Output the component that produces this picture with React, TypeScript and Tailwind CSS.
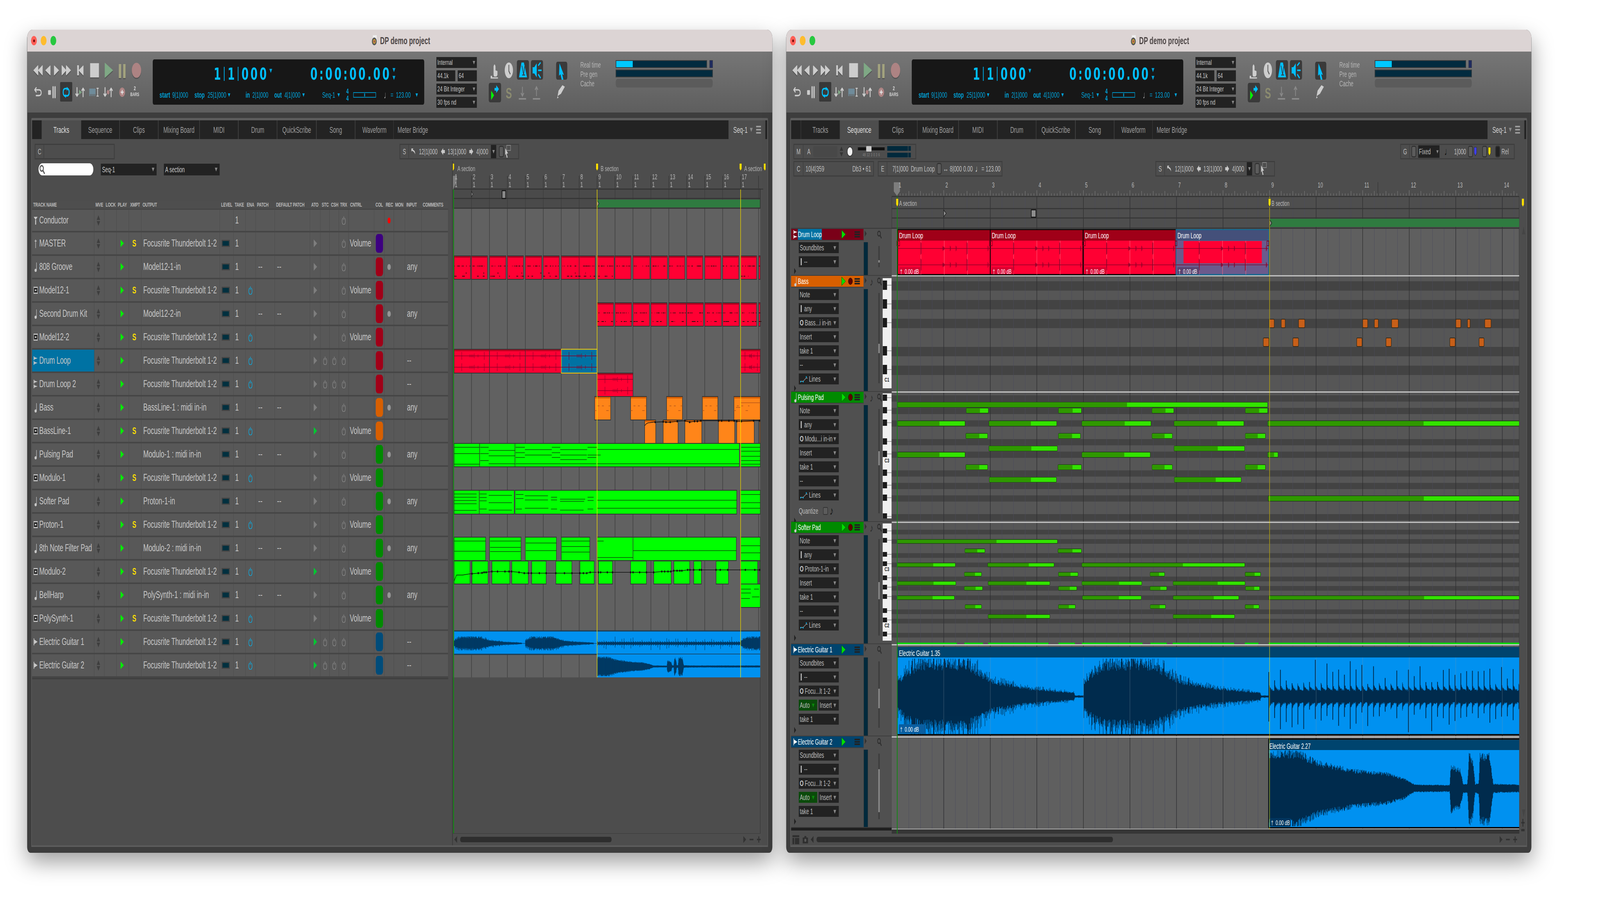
import React from 'react';

function rng(seed: number) {
  let s = seed >>> 0;
  return () => {
    s = (s + 0x6d2b79f5) >>> 0;
    let t = s;
    t = Math.imul(t ^ (t >>> 15), t | 1);
    t ^= t + Math.imul(t ^ (t >>> 7), t | 61);
    return ((t ^ (t >>> 14)) >>> 0) / 4294967296;
  };
}
function lerp(pts: number[][], x: number) {
  for (let i = 1; i < pts.length; i++) {
    if (x <= pts[i][0]) {
      const [a, b] = pts[i - 1];
      const [c, d] = pts[i];
      return b + ((d - b) * (x - a)) / (c - a || 1);
    }
  }
  return pts[pts.length - 1][1];
}

const Caret = ({ c = '#8a8a8a', s = 12 }: { c?: string; s?: number }) => (
  <svg width={s} height={s} viewBox="0 0 12 12" className="shrink-0">
    <polygon points="1,2 11,2 6,11" fill={c} />
  </svg>
);

/* ---------- toolbar ---------- */
function Transport() {
  const c = '#cdcdcd';
  const rj = { strokeLinejoin: 'round' as const };
  return (
    <div className="flex flex-col w-[500px] mt-[18px] ml-[18px] shrink-0">
      <svg width={500} height={50} viewBox="0 0 1500 150" className="drop-shadow-[0_2px_1px_rgba(0,0,0,0.35)]">
        <g fill={c} stroke={c} strokeWidth={6} style={rj}>
          <polygon points="27,90 80,54 80,126" />
          <polygon points="84,90 135,54 135,126" />
          <polygon points="175,90 232,56 232,126" />
          <polygon points="281,56 336,90 281,126" />
          <polygon points="376,54 428,90 376,126" />
          <polygon points="430,54 484,90 430,126" />
          <rect x="568" y="54" width="15" height="72" />
          <polygon points="587,90 640,56 640,126" />
          <rect x="728" y="38" width="104" height="104" />
        </g>
        <polygon points="908,34 1006,90 908,146" fill="#7fa885" stroke="#7fa885" strokeWidth={4} style={rj} />
        <rect x="1080" y="42" width="30" height="108" rx="3" fill="#a3a37f" />
        <rect x="1134" y="42" width="30" height="108" rx="3" fill="#a3a37f" />
        <circle cx="1299" cy="90" r="58" fill="#ad8383" />
      </svg>
      <div className="flex items-start mt-[10px]">
        <svg width={400} height={52} viewBox="0 0 1200 156" className="shrink-0">
          <rect x="354" y="0" width="150" height="150" rx="10" fill="#383838" />
          <g fill="none" stroke="#cdcdcd" strokeWidth={11} strokeLinecap="round" strokeLinejoin="round">
            <path d="M42 60 H90 Q120 60 120 82 Q120 104 90 104 H58" />
            <path d="M58 44 L40 60 L58 76" />
            <path d="M267 38 V118 M291 38 V118" strokeWidth={15} />
            <path d="M563 44 V108 M548 92 L563 108 L578 92" />
            <path d="M638 112 V48 M623 64 L638 48 L653 64" />
            <path d="M910 44 V108 M895 92 L910 108 L925 92" />
            <path d="M985 112 V48 M970 64 L985 48 L1000 64" />
            <path d="M808 48 H828 M808 108 H828 M818 48 V108" strokeWidth={8} />
          </g>
          <rect x="205" y="62" width="35" height="36" rx="5" fill="#cdcdcd" />
          <g fill="none" stroke="#00bfff" strokeWidth={12} strokeLinecap="round">
            <path d="M450 50 H420 Q392 50 392 78 Q392 100 410 106" />
            <path d="M408 106 H438 Q466 106 466 78 Q466 60 450 52" />
          </g>
          <polygon points="436,36 458,52 436,68" fill="#00bfff" />
          <polygon points="426,92 404,108 426,122" fill="#00bfff" />
          <polygon points="589,60 624,78 589,98" fill="#7fa885" />
          <path d="M715 50 H792 V108 H788 V92 H778 V108 H770 V92 H760 V108 H752 V92 H742 V108 H734 V92 H724 V108 H715 Z" fill="#6f8c9b" />
          <circle cx="948" cy="78" r="17" fill="#ad8383" />
          <circle cx="1122" cy="78" r="36" fill="#ad8383" />
          <path d="M1122 60 V96 M1104 78 H1140" stroke="#e0e0e0" strokeWidth={10} />
        </svg>
        <div className="ml-[1px] flex flex-col items-center text-[#d6d6d6] font-bold leading-none mt-[8px] w-[50px]">
          <span className="text-[15px]">2</span>
          <span className="text-[13px] mt-[2px]">BARS</span>
        </div>
      </div>
    </div>
  );
}

const Bar = () => <span className="text-[38px] font-normal mx-[1px] font-['Liberation_Sans',sans-serif] relative -top-[3px] text-[#00a8e0]">|</span>;

function Display() {
  const Sm = ({ children, w }: { children: React.ReactNode; w: number }) => (
    <span className="shrink-0 whitespace-nowrap" style={{ width: w }}>{children}</span>
  );
  return (
    <div className="ml-[0px] mt-[20px] w-[1120px] h-[116px] rounded-[6px] bg-[#171717] shrink-0 flex flex-col text-[#00a4dc]">
      <div className="flex items-center h-[72px] pt-[2px] text-[#00bfff] font-['DejaVu_Sans',sans-serif] font-bold text-[42px] tracking-[8px] whitespace-nowrap">
        <div className="ml-[252px] w-[398px] flex items-center">
          <span>1</span><Bar /><span>1</span><Bar /><span>000</span>
          <span className="ml-[2px] -mt-[16px]"><Caret c="#00a4dc" s={14} /></span>
        </div>
        <span className="tracking-[8px]">0:00:00.00</span>
        <span className="ml-[4px] flex flex-col gap-[6px]"><Caret c="#00a4dc" s={14} /><Caret c="#00a4dc" s={14} /></span>
      </div>
      <div className="flex items-center text-[20px] h-[36px] mt-[1px] pl-[28px] whitespace-nowrap">
        <Sm w={52}><b>start</b></Sm>
        <Sm w={92}>9|1|000</Sm>
        <Sm w={54}><b>stop</b></Sm>
        <Sm w={83}>25|1|000</Sm>
        <Sm w={74}><Caret c="#00a4dc" /></Sm>
        <Sm w={28}><b>in</b></Sm>
        <Sm w={90}>2|1|000</Sm>
        <Sm w={42}><b>out</b></Sm>
        <Sm w={73}>4|1|000</Sm>
        <Sm w={83}><Caret c="#00a4dc" /></Sm>
        <Sm w={62}>Seq-1</Sm>
        <Sm w={37}><Caret c="#00a4dc" /></Sm>
        <span className="w-[29px] flex flex-col items-start leading-[18px] font-bold text-[18px]"><span>4</span><span>4</span></span>
        <div className="w-[94px] h-[14px] border-[2px] border-[#0090c0] flex items-center justify-center shrink-0"><div className="w-[4px] h-[8px] bg-[#0090c0]" /></div>
        <span className="ml-[32px] w-[28px] text-[#9a9a9a] text-[26px] leading-none">♩</span>
        <span className="w-[22px]">=</span>
        <span className="w-[80px]">123.00</span>
        <Caret c="#00a4dc" />
      </div>
    </div>
  );
}

function TopSelects() {
  const B = ({ t, w, car = true }: { t: string; w: number; car?: boolean }) => (
    <div className="h-[28px] bg-[#222] text-[#c4c4c4] text-[19px] flex items-center justify-between pl-[4px] pr-[6px] whitespace-nowrap" style={{ width: w }}>
      <span>{t}</span>{car && <Caret />}
    </div>
  );
  return (
    <div className="ml-[50px] mt-[14px] flex flex-col gap-[6px] shrink-0 w-[167px]">
      <B t="Internal" w={167} />
      <div className="flex justify-between"><B t="44.1k" w={78} car={false} /><B t="64" w={79} car={false} /></div>
      <B t="24 Bit Integer" w={167} />
      <B t="30 fps nd" w={167} />
    </div>
  );
}

function RightIcons() {
  return (
    <svg width={330} height={110} viewBox="2020 152 330 110" className="ml-[47px] mt-[20px] shrink-0">
      <rect x="2138" y="154" width="50" height="50" rx="6" fill="#3a3a3a" />
      <rect x="2196" y="154" width="50" height="50" rx="6" fill="#3a3a3a" />
      <rect x="2300" y="158" width="46" height="46" rx="6" fill="#3a3a3a" />
      <rect x="2022" y="212" width="51" height="50" rx="6" fill="#3a3a3a" />
      <path d="M2042 192 V170 Q2046 160 2050 170 V180 L2058 182 V192 L2054 196 H2044 Z" fill="#cdcdcd" />
      <path d="M2030 194 H2036 V198 H2060 V201 H2030 Z" fill="#cdcdcd" />
      <ellipse cx="2105" cy="180" rx="17" ry="20" fill="#cdcdcd" />
      <path d="M2105 166 V182 L2111 190" stroke="#555" strokeWidth="3" fill="none" />
      <path d="M2157 160 H2167 L2180 198 H2147 Z" fill="#00bfff" />
      <path d="M2159 168 L2166 192 L2170 170 M2160 192 H2172" stroke="#3a3a3a" strokeWidth="2.5" fill="none" />
      <path d="M2203 172 H2210 L2220 162 V198 L2210 188 H2203 Z" fill="#00bfff" />
      <path d="M2226 168 L2236 160 M2226 180 H2240 M2226 190 L2236 200" stroke="#00bfff" strokeWidth="4" />
      <polygon points="2314,162 2332,192 2325,190 2330,204 2323,204 2318,190 2312,194" fill="#00bfff" />
      <polygon points="2032,238 2044,250 2032,262" fill="#00ff00" transform="translate(0 -6)" />
      <path d="M2046 225 H2053 V218 L2064 228 L2053 238 V232 H2046 Z" fill="#00bfff" />
      <text x="2105" y="252" fontSize="38" fontWeight="700" fill="#8c8c70" textAnchor="middle" fontFamily="Liberation Sans">S</text>
      <path d="M2161 222 V244 M2155 238 L2161 246 L2167 238" stroke="#8a8a8a" strokeWidth="3" fill="none" />
      <path d="M2146 251 H2176 V255 H2146 Z" fill="#8a8a8a" />
      <path d="M2219 246 V224 M2213 230 L2219 222 L2225 230" stroke="#8a8a8a" strokeWidth="3" fill="none" />
      <path d="M2204 251 H2234 V255 H2204 Z" fill="#8a8a8a" />
      <path d="M2306 246 L2310 232 L2326 218 L2336 222 L2320 240 Z" fill="#cdcdcd" />
      <path d="M2306 246 L2304 252 L2310 250" fill="#cdcdcd" />
    </svg>
  );
}

function Meters() {
  return (
    <div className="flex mt-[22px] ml-[50px] shrink-0 text-[20px] text-[#b8b8b8]">
      <div className="w-[146px] flex flex-col leading-[24px] pt-[0px]">
        <span>Real time</span><span>Pre gen</span><span>Cache</span>
      </div>
      <div className="flex flex-col gap-[4px] w-[400px]">
        <div className="flex items-center">
          <div className="w-[400px] h-[20px] bg-[#022b3f] border-[2px] border-[#3c3c3c] flex"><div className="w-[68px] bg-[#00c8ff]" /></div>
          <div className="ml-[11px] w-[13px] h-[20px] bg-[#1f2b5e] border-[1px] border-[#3c3c3c] shrink-0" />
        </div>
        <div className="w-[400px] h-[20px] bg-[#022b3f] border-[2px] border-[#3c3c3c]" />
        <div className="w-[400px] h-[22px] rounded-[8px] bg-[#5b5b5b]" />
      </div>
    </div>
  );
}

function Titlebar() {
  return (
    <div className="h-[56px] bg-[#dcd4d4] flex items-center relative shrink-0">
      <div className="flex items-center gap-[16px] ml-[16px]">
        <span className="w-[24px] h-[24px] rounded-full bg-[#ff5f57] flex items-center justify-center"><span className="w-[7px] h-[7px] rounded-full bg-[#6e0505]" /></span>
        <span className="w-[24px] h-[24px] rounded-full bg-[#febc2e]" />
        <span className="w-[24px] h-[24px] rounded-full bg-[#28c840]" />
      </div>
      <div className="ml-[1300px] flex items-center gap-[10px] text-[26px] font-bold text-[#4c4545] whitespace-nowrap">
        <svg width="26" height="28" viewBox="0 0 26 28"><rect x="6" y="0" width="16" height="20" fill="#eee" /><circle cx="12" cy="16" r="10" fill="#555" /><circle cx="12" cy="16" r="6" fill="#c9a23a" /><circle cx="12" cy="16" r="3" fill="#a05050" /></svg>
        <span>DP demo project</span>
      </div>
    </div>
  );
}

function Toolbar() {
  return (
    <div className="h-[156px] bg-gradient-to-b from-[#767676] to-[#5e5e5e] flex shrink-0">
      <Transport />
      <Display />
      <TopSelects />
      <RightIcons />
      <Meters />
    </div>
  );
}

function Tabs({ active }: { active: string }) {
  const tabs: [string, number][] = [['Tracks', 162], ['Sequence', 159], ['Clips', 160], ['Mixing Board', 170], ['MIDI', 160], ['Drum', 160], ['QuickScribe', 162], ['Song', 160], ['Waveform', 159]];
  return (
    <div className="h-[48px] flex shrink-0 text-[22px] whitespace-nowrap">
      <div className="w-[40px] bg-[#232323]" />
      {tabs.map(([t, w]) => (
        <div key={t} style={{ width: w }} className={t === active ? 'bg-[#4d4d4d] text-[#dedede] flex items-center justify-center' : 'bg-[#232323] text-[#9a9a9a] border-l border-r border-[#4f4f4f] flex items-center justify-center'}>{t}</div>
      ))}
      <div className="flex-1 bg-[#232323] text-[#9a9a9a] pl-[16px] flex items-center">Meter Bridge</div>
      <div className="w-[152px] flex items-center pl-[20px] text-[#cfcfcf]">
        <span>Seq-1</span><span className="ml-[8px]"><Caret s={14} /></span>
        <div className="ml-[13px] w-[20px] flex flex-col gap-[4px]"><i className="h-[4px] bg-[#9a9a9a]" /><i className="h-[4px] bg-[#9a9a9a]" /><i className="h-[4px] bg-[#9a9a9a]" /></div>
      </div>
      <div className="w-[8px] bg-[#232323]" />
    </div>
  );
}

const Toggle = ({ c = '#5c5c5c' }: { c?: string }) => <span className="inline-block w-[20px] h-[30px] rounded-[6px] bg-[#565656] border-[3px] border-[#333] shrink-0" style={{ background: c }} />;

function SBox({ className = '' }: { className?: string }) {
  return (
    <div className={'h-[40px] w-[493px] border-[3px] border-[#3e3e3e] flex items-center text-[20px] text-[#bdbdbd] whitespace-nowrap shrink-0 ' + className}>
      <span className="w-[36px] text-center border-r-[2px] border-[#3e3e3e] h-full flex items-center justify-center shrink-0">S</span>
      <svg width="22" height="20" viewBox="0 0 22 20" className="ml-[7px] shrink-0"><path d="M3 10 L3 2 L11 2 L8 5 Q18 6 19 17 Q14 10 6 8 Z" fill="#c8c8c8" /></svg>
      <span className="ml-[12px]">12|1|000</span>
      <svg width="20" height="20" viewBox="0 0 20 20" className="ml-[12px] shrink-0"><path d="M2 10 L11 1 V6 H18 V14 H11 V19 Z" fill="#c8c8c8" /></svg>
      <span className="ml-[9px]">13|1|000</span>
      <svg width="20" height="20" viewBox="0 0 20 20" className="ml-[11px] shrink-0"><path d="M18 10 L9 1 V6 H2 V14 H9 V19 Z" fill="#c8c8c8" /></svg>
      <span className="ml-[10px]">4|000</span>
      <span className="ml-[11px] w-[22px] h-[34px] bg-[#222] flex items-center justify-center shrink-0"><Caret s={12} /></span>
      <span className="ml-[11px] flex"><Toggle /></span>
      <svg width="26" height="34" viewBox="0 0 26 34" className="ml-[4px] shrink-0"><rect x="8" y="1" width="16" height="13" fill="none" stroke="#888" strokeWidth="2" /><polygon points="2,8 14,22 8,22 12,32 8,33 5,23 2,26" fill="#c8c8c8" /></svg>
    </div>
  );
}

/* ---------- Tracks table ---------- */
const COLW = [257, 42, 50, 51, 51, 324, 56, 50, 42, 79, 145, 43, 38, 38, 41, 105, 42, 39, 46, 68, 110];
const HEAD = ['TRACK NAME', 'MVE', 'LOCK', 'PLAY', 'XMPT', 'OUTPUT', 'LEVEL', 'TAKE', 'ENA', 'PATCH', 'DEFAULT PATCH', 'ATO', 'STC', 'CSH', 'TRX', 'CNTRL', 'COL', 'REC', 'MON', 'INPUT', 'COMMENTS'];
const FOC = 'Focusrite Thunderbolt 1-2';
type T = { n: string; t: string; out?: string; s?: boolean; ena?: boolean; mid?: boolean; ato?: string; au?: boolean; vol?: boolean; col?: string; rec?: boolean; inp?: string; sel?: boolean };
const RD = '#a00018', OR = '#d85f00', GR = '#008a00', BL = '#004c7a';
const TR: T[] = [
  { n: 'Conductor', t: 'c' },
  { n: 'MASTER', t: 'm', out: FOC, s: true, ato: 'g', vol: true, col: '#3d0080' },
  { n: '808 Groove', t: 'n', out: 'Model12-1-in', mid: true, ato: 'g', col: RD, rec: true, inp: 'any' },
  { n: 'Model12-1', t: 'i', out: FOC, s: true, ena: true, ato: 'g', vol: true, col: RD },
  { n: 'Second Drum Kit', t: 'n', out: 'Model12-2-in', mid: true, ato: 'g', col: RD, rec: true, inp: 'any' },
  { n: 'Model12-2', t: 'i', out: FOC, s: true, ena: true, ato: 'g', vol: true, col: RD },
  { n: 'Drum Loop', t: 'a', out: FOC, ena: true, ato: 'g', au: true, col: RD, inp: '--', sel: true },
  { n: 'Drum Loop 2', t: 'a', out: FOC, ena: true, ato: 'g', au: true, col: RD, inp: '--' },
  { n: 'Bass', t: 'n', out: 'BassLine-1 : midi in-in', mid: true, ato: 'g', col: OR, rec: true, inp: 'any' },
  { n: 'BassLine-1', t: 'i', out: FOC, s: true, ena: true, ato: 'v', vol: true, col: OR },
  { n: 'Pulsing Pad', t: 'n', out: 'Modulo-1 : midi in-in', mid: true, ato: 'g', col: GR, rec: true, inp: 'any' },
  { n: 'Modulo-1', t: 'i', out: FOC, s: true, ena: true, ato: 'g', vol: true, col: GR },
  { n: 'Softer Pad', t: 'n', out: 'Proton-1-in', mid: true, ato: 'g', col: GR, rec: true, inp: 'any' },
  { n: 'Proton-1', t: 'i', out: FOC, s: true, ena: true, ato: 'g', vol: true, col: GR },
  { n: '8th Note Filter Pad', t: 'n', out: 'Modulo-2 : midi in-in', mid: true, ato: 'g', col: GR, rec: true, inp: 'any' },
  { n: 'Modulo-2', t: 'i', out: FOC, s: true, ena: true, ato: 'v', vol: true, col: GR },
  { n: 'BellHarp', t: 'n', out: 'PolySynth-1 : midi in-in', mid: true, ato: 'g', col: GR, rec: true, inp: 'any' },
  { n: 'PolySynth-1', t: 'i', out: FOC, s: true, ena: true, ato: 'g', vol: true, col: GR },
  { n: 'Electric Guitar 1', t: 'e', out: FOC, ena: true, ato: 'v', au: true, col: BL, inp: '--' },
  { n: 'Electric Guitar 2', t: 'e', out: FOC, ena: true, ato: 'v', au: true, col: BL, inp: '--' },
];

const Power = ({ c = '#8c8c8c' }: { c?: string }) => (
  <svg width="16" height="22" viewBox="0 0 16 22"><path d="M5 5 A7 9 0 1 0 11 5" fill="none" stroke={c} strokeWidth="1.8" /><path d="M8 1 V10" stroke={c} strokeWidth="1.8" /></svg>
);
const Tri = ({ c, h = 18 }: { c: string; h?: number }) => (
  <svg width={h * 0.7} height={h} viewBox="0 0 7 10"><polygon points="0,0 7,5 0,10" fill={c} /></svg>
);
const TypeIcon = ({ t, white }: { t: string; white?: boolean }) => {
  const c = '#c8c8c8';
  if (t === 'i') return <svg width="18" height="18" viewBox="0 0 18 18"><rect width="18" height="18" fill="#c0c0c0" /><rect x="2" y="3" width="14" height="12" fill="#222" /><rect x="6" y="7" width="6" height="4" fill="#ccc" /></svg>;
  if (t === 'n') return <svg width="18" height="28" viewBox="0 0 18 28"><ellipse cx="9" cy="23" rx="4.5" ry="4" fill={c} /><path d="M12.5 3 V22" stroke={c} strokeWidth="1.8" /></svg>;
  if (t === 'm') return <svg width="18" height="28" viewBox="0 0 18 28"><path d="M9 4 V26 M5 8 H13" stroke={c} strokeWidth="2" /></svg>;
  if (t === 'c') return <svg width="18" height="26" viewBox="0 0 18 26"><path d="M1 4 H17 L9 12 Z M7 12 H11 V24 H7 Z" fill={c} /></svg>;
  if (t === 'a') return <svg width="18" height="24" viewBox="0 0 18 24"><path d="M2 1 V11 M2 13 V23" stroke={c} strokeWidth="2.5" /><path d="M3 3 L17 6 L3 9 Z M3 15 L17 18 L3 21 Z" fill={white ? '#fff' : c} /></svg>;
  return <svg width="18" height="20" viewBox="0 0 18 20"><path d="M2 1 V19" stroke={c} strokeWidth="2.5" /><path d="M3 4 L17 10 L3 16 Z" fill={white ? '#fff' : c} /></svg>;
};

function Row({ r, i }: { r: T; i: number }) {
  const Cell = ({ k, children, className = '' }: { k: number; children?: React.ReactNode; className?: string }) => (
    <div style={{ width: COLW[k] }} className={'h-full shrink-0 border-r border-[#474747] flex items-center ' + className}>{children}</div>
  );
  const has = i > 0;
  return (
    <div className={(i === 0 ? 'h-[58px] ' : 'h-[60px] ') + 'flex bg-[#585858] border-b-[4px] border-[#464646] text-[26.5px] text-[#c6c6c6] whitespace-nowrap'}>
      <Cell k={0} className={r.sel ? 'bg-[#0072a3] pl-[5px]' : 'pl-[5px]'}>
        <span className="w-[19px] flex justify-center shrink-0"><TypeIcon t={r.t} /></span>
        <span className="ml-[6px] tracking-[-0.2px]">{r.n}</span>
      </Cell>
      <Cell k={1} className="justify-center">
        <div className="flex flex-col gap-[3px] -ml-[8px]">
          <svg width="14" height="12" viewBox="0 0 14 12"><polygon points="7,0 14,12 0,12" fill="#3e3e3e" /></svg>
          <svg width="14" height="12" viewBox="0 0 14 12"><polygon points="0,0 14,0 7,12" fill="#3e3e3e" /></svg>
        </div>
      </Cell>
      <Cell k={2} />
      <Cell k={3} className="pl-[16px]">{has && <Tri c="#00ee00" h={20} />}</Cell>
      <Cell k={4} className="pl-[14px]">{r.s && <span className="font-bold text-[#ffe000] text-[24px]">S</span>}</Cell>
      <Cell k={5} className="pl-[8px]">{r.out}</Cell>
      <Cell k={6} className="pl-[8px]">{has && <span className="w-[32px] h-[18px] bg-[#00303f] border-[3px] border-[#444] block" />}</Cell>
      <Cell k={7} className="pl-[7px]">1</Cell>
      <Cell k={8} className="pl-[12px]">{r.ena && <Power c="#00b4f0" />}</Cell>
      <Cell k={9} className="pl-[10px]">{r.mid && '--'}</Cell>
      <Cell k={10} className="pl-[9px]">{r.mid && '--'}</Cell>
      <Cell k={11} className="pl-[15px]">{r.ato && <Tri c={r.ato === 'v' ? '#00c832' : '#7e7e7e'} h={20} />}</Cell>
      <Cell k={12} className="pl-[11px]">{r.au && <Power />}</Cell>
      <Cell k={13} className="pl-[11px]">{r.au && <Power />}</Cell>
      <Cell k={14} className="pl-[12px]"><Power /></Cell>
      <Cell k={15} className="pl-[4px]">{r.vol && 'Volume'}</Cell>
      <Cell k={16} className="justify-center">{r.col && <span className="w-[30px] h-[48px] rounded-[9px] block" style={{ background: r.col }} />}</Cell>
      <Cell k={17} className="justify-center">{i === 0 && <span className="w-[12px] h-[15px] rounded-full bg-[#ff0000] block" />}{r.rec && <span className="w-[14px] h-[15px] rounded-full bg-[#969696] block" />}</Cell>
      <Cell k={18} />
      <Cell k={19} className="pl-[8px]">{r.inp}</Cell>
      <Cell k={20} />
    </div>
  );
}

function TracksTable() {
  return (
    <div className="w-[1717px] shrink-0 flex flex-col">
      <div className="flex items-center h-[33px] mt-[5px] ml-[27px] text-[20px] text-[#c8c8c8]">
        <div className="w-[226px] h-[31px] rounded-full bg-white flex items-center pl-[3px]">
          <svg width="26" height="26" viewBox="0 0 26 26"><circle cx="10" cy="10" r="7" fill="none" stroke="#555" strokeWidth="3.5" /><path d="M15 15 L22 24" stroke="#555" strokeWidth="4" /></svg>
        </div>
        <div className="ml-[31px] w-[230px] h-[30px] bg-[#222] flex items-center justify-between pl-[5px] pr-[8px]"><span>Seq-1</span><Caret s={13} /></div>
        <div className="ml-[30px] w-[230px] h-[30px] bg-[#222] flex items-center justify-between pl-[5px] pr-[8px]"><span>A section</span><Caret s={13} /></div>
      </div>
      <div className="h-[65px] shrink-0" />
      <div className="flex h-[19px] shrink-0 text-[15px] font-bold text-[#b8b8b8] tracking-[-0.4px] items-center whitespace-nowrap bg-[#4e4e4e] border-b-[3px] border-[#464646] box-content">
        {HEAD.map((h, i) => <div key={h} style={{ width: COLW[i] }} className="shrink-0 pl-[5px] overflow-hidden">{h}</div>)}
      </div>
      {TR.map((r, i) => <Row key={r.n} r={r} i={i} />)}
      <div className="h-[4px] bg-[#404040]" />
    </div>
  );
}

/* ---------- left timeline ---------- */
const LX = (X: number) => X / 1.206 + 1850;
const LB = (n: number) => 1871 + 74 * (n - 1);

const Marker = ({ x, y, h = 20, c = '#ffe000' }: { x: number; y: number; h?: number; c?: string }) => (
  <path d={`M${x - 5} ${y} H${x + 5} V${y + h * 0.7} L${x} ${y + h} L${x - 5} ${y + h * 0.7} Z`} fill={c} stroke="#444" strokeWidth="1.5" />
);

function waveD(x0: number, x1: number, cy: number, f: (x: number, r: () => number) => [number, number], seed: number, step = 1.5) {
  const r = rng(seed);
  let d = '';
  for (let x = x0; x < x1; x += step) {
    const [a, b] = f(x, r);
    d += `M${x.toFixed(1)} ${(cy - a).toFixed(1)}V${(cy + b).toFixed(1)}`;
  }
  return d;
}

function eg1Fn(start: number, barW: number, maxA: number, spikeFrom: number, spikeTo: number) {
  const s = barW / 192;
  const pts = [[0, 0.45], [40, 0.75], [90, 1], [290, 1], [340, 0.72], [400, 0.45], [550, 0.24], [728, 0.12], [731, 0.03], [768, 0.03]];
  return (x: number, r: () => number): [number, number] => {
    if (x >= spikeFrom && x < spikeTo) {
      const pos = (x - spikeFrom) / s;
      const k = Math.floor(pos / 24);
      const p = pos % 24;
      const r2 = rng(k * 7 + 11);
      const h1 = 0.3 + r2() * 0.68, h2 = 0.3 + r2() * 0.68;
      const saw = Math.exp(-p / 7);
      const base = 0.13 + 0.2 * saw + r() * 0.05;
      const top = p < 1.7 ? Math.max(base, (k % 2 ? 0.75 : 1) * h1) : base;
      const bot = p < 1.7 ? Math.max(base, (k % 2 ? 0.8 : 1) * h2) : base;
      return [maxA * top, maxA * bot];
    }
    const t = ((x - start) / s) % 768;
    const e = lerp(pts, t);
    const spike = r() > 0.82 ? 0.28 : 0;
    const a = e * maxA * (0.68 + r() * 0.3 + spike);
    const b = e * maxA * (0.6 + r() * 0.34 + spike * 1.4);
    return [Math.min(maxA, a), Math.min(maxA, b)];
  };
}
function eg2Fn(start: number, barW: number, maxA: number) {
  const s = barW / 192;
  const pts = [[0, 1], [120, 1], [200, 0.72], [350, 0.5], [480, 0.42], [555, 0.28], [600, 0.1], [745, 0.09], [750, 0.62], [790, 0.5], [800, 0.12], [818, 0.12], [825, 0.95], [840, 0.8], [850, 0.12], [865, 0.15], [870, 0.95], [910, 0.9], [925, 0.12], [1040, 0.1]];
  return (x: number, r: () => number): [number, number] => {
    const e = lerp(pts, (x - start) / s);
    return [Math.min(maxA, e * maxA * (0.78 + r() * 0.26)), Math.min(maxA, e * maxA * (0.8 + r() * 0.28))];
  };
}

function LeftClip({ a, b, y, h, c, strip, sel, children }: { a: number; b: number; y: number; h: number; c: string; strip?: string; sel?: boolean; children?: React.ReactNode }) {
  const x0 = LX(a), x1 = LX(b);
  return (
    <g>
      <rect x={x0} y={y} width={x1 - x0} height={h} fill={sel ? '#0072a3' : c} stroke={sel ? '#ffc800' : '#333'} strokeWidth="2" />
      {strip && !sel && <rect x={x0 + 1} y={y + 1} width={x1 - x0 - 2} height={4} fill={strip} />}
      {children}
    </g>
  );
}

function LeftTimeline() {
  const RED = '#ff0033', RST = '#b80020', ORA = '#ff8519', OST = '#d85f00', GRN = '#00ff00';
  const c1: [number, number][] = [[28, 110], [114, 194], [204, 286], [293, 373], [382, 464], [471, 551], [561, 650], [650, 730], [740, 824], [828, 908], [918, 1002], [1007, 1089], [1096, 1176], [1185, 1265], [1275, 1355], [1364, 1444], [1454, 1533], [1543, 1551]];
  const c2: [number, number][] = [[740, 821], [828, 911], [918, 1000], [1007, 1087], [1096, 1183], [1185, 1268], [1275, 1359], [1364, 1446], [1454, 1533], [1543, 1551]];
  const dl: [number, number, boolean?][] = [[28, 204], [204, 382], [382, 561], [561, 739, true], [1454, 1551]];
  const bs: [number, number][] = [[727, 807], [906, 985], [1085, 1164], [1263, 1340], [1420, 1551]];
  const bl: [number, number][] = [[976, 1031], [1068, 1142], [1176, 1260], [1343, 1424], [1434, 1521], [1547, 1551]];
  const m2: [number, number][] = [[28, 107], [117, 197], [216, 305], [315, 397], [414, 486], [534, 614], [654, 725], [746, 816], [906, 985], [1021, 1108], [1121, 1200], [1220, 1258], [1331, 1393], [1454, 1538], [1548, 1551]];
  const p8: [number, number][] = [[28, 185], [204, 361], [382, 537], [561, 703], [740, 918], [918, 1432], [1454, 1551]];
  const pul: [number, number][] = [[28, 155], [155, 331], [331, 1447], [1453, 1551]];
  const sof: [number, number][] = [[28, 153], [153, 327], [331, 1434], [1451, 1551]];
  const r = rng(7);
  const dots = (a: number, b: number, y: number, n: number, maxw = 3) => {
    let d = '';
    for (let i = 0; i < n; i++) {
      const x = a + r() * (b - a - 3);
      d += `M${x.toFixed(1)} ${y}h${(1 + r() * maxw).toFixed(1)}`;
    }
    return d;
  };
  const dlw = (x0: number, x1: number, y: number) => {
    let d = `M${x0} ${y}H${x1}`;
    const w = (x1 - x0) / 148;
    [32, 66, 72, 78, 84, 100, 126].forEach((o, i) => {
      const h = i === 0 || i === 6 ? 10 : i === 4 ? 6 : 4;
      d += `M${x0 + o * w} ${y - h}V${y + h}`;
    });
    return d;
  };
  const autoPts: [number, number][] = [[1028, 1334], [1068, 1332], [1082, 1334], [1103, 1334], [1138, 1330], [1176, 1327], [1200, 1334], [1224, 1330], [1238, 1330], [1255, 1327], [1343, 1327], [1359, 1327], [1395, 1327], [1421, 1327], [1434, 1330], [1457, 1330], [1518, 1327], [1547, 1327]];
  const m2Pts: [number, number][] = [[117, 454], [148, 452], [167, 451], [177, 449], [187, 449], [216, 446], [244, 446], [281, 446], [301, 446], [314, 446], [351, 449], [377, 452], [397, 452], [413, 452], [452, 452], [486, 452], [534, 452], [577, 452], [614, 452], [654, 452], [671, 452], [688, 452], [705, 449], [746, 449], [757, 449], [790, 449], [816, 449], [906, 449], [918, 449], [951, 449], [985, 449], [1021, 449], [1061, 446], [1075, 446], [1092, 446], [1106, 446], [1121, 443], [1137, 443], [1151, 443], [1161, 443], [1190, 440], [1201, 440], [1220, 440], [1249, 440], [1258, 440], [1331, 440], [1352, 440], [1389, 440], [1453, 440], [1477, 440], [1524, 440], [1548, 440]];
  const y5 = (Y: number) => 400 + Y / 1.96;
  const y6 = (Y: number) => 1150 + Y / 1.425;
  const hlines = (ls: [number, number, number][], fn: (Y: number) => number) => ls.map(([a, b, Y]) => `M${LX(a).toFixed(1)} ${fn(Y).toFixed(1)}H${LX(b).toFixed(1)}`).join('');
  const pl: [number, number, number][] = [[28, 155, 1460], [28, 155, 1492], [28, 155, 1545], [158, 200, 1460], [200, 331, 1476], [158, 200, 1492], [200, 331, 1503], [158, 200, 1527], [200, 331, 1543], [334, 380, 1460], [380, 514, 1472], [514, 556, 1460], [556, 690, 1472], [692, 738, 1460], [334, 380, 1487], [380, 514, 1499], [514, 556, 1487], [556, 688, 1499], [692, 757, 1499], [334, 380, 1511], [514, 556, 1511], [556, 688, 1522], [692, 735, 1511], [738, 1447, 1471], [738, 1447, 1543], [334, 735, 1543], [1456, 1551, 1460], [1456, 1551, 1480], [1456, 1551, 1505], [1456, 1551, 1527], [1456, 1551, 1545]];
  const sl: [number, number, number][] = [[28, 140, 163], [28, 140, 175], [28, 140, 187], [28, 140, 199], [28, 140, 223], [155, 190, 163], [155, 190, 176], [155, 190, 188], [200, 316, 168], [200, 316, 195], [155, 190, 218], [200, 316, 222], [335, 373, 165], [380, 495, 170], [510, 540, 175], [555, 680, 182], [692, 722, 175], [335, 373, 180], [380, 495, 185], [510, 540, 185], [555, 675, 190], [692, 722, 187], [335, 365, 218], [380, 497, 215], [510, 540, 218], [555, 672, 222], [692, 720, 218], [738, 1434, 186], [738, 1434, 215], [1454, 1551, 165], [1454, 1551, 195], [1454, 1551, 215]];
  const pad: [number, number, number][] = [[28, 185, 335], [28, 185, 372], [207, 360, 335], [207, 360, 358], [207, 360, 373], [385, 537, 342], [385, 537, 370], [563, 703, 335], [563, 703, 355], [563, 703, 375], [740, 772, 335], [740, 918, 395], [918, 1432, 370], [1454, 1551, 352], [1454, 1551, 378]];
  return (
    <div className="w-[1290px] shrink-0 relative h-[1722px]">
      <svg width={1290} height={1722} viewBox="1868 412 1290 1722" className="block">
        <rect x="1868" y="534" width="1268" height="1200" fill="#616161" />
        <rect x="1871" y="485" width="1265" height="49" fill="#4a4a4a" />
        {Array.from({ length: 18 }, (_, i) => {
          const x = LB(i + 1);
          return <React.Fragment key={i}>
            <path d={`M${x} 450V482`} stroke="#2d2d2d" strokeWidth="1.5" />
            <path d={`M${x} 485V1734`} stroke="#3c3c3c" strokeWidth="2" />
          </React.Fragment>;
        })}
        <path d="M1871 1734V534" stroke="#3c3c3c" />
        <rect x="2463" y="511" width="673" height="20" fill="#2f7b40" />
        <path d="M1871 484H3136M1871 508H3136M1871 533H3136M3136 484V534" stroke="#333" strokeWidth="2.5" fill="none" />
        <path d="M3136 484H3148" stroke="#333" strokeWidth="2" />
        <polygon points="1945,490 1945,504 1951,497" fill="#9a9a9a" stroke="#1f1f1f" strokeWidth="1.5" />
        <rect x="2071" y="488" width="15" height="20" fill="#8a8a8a" stroke="#111" strokeWidth="2.5" />
        <polygon points="2463,513 2463,530 2471,521" fill="#8a8a8a" stroke="#1f1f1f" strokeWidth="1.5" />
        {/* red */}
        {c1.map(([a, b], i) => <LeftClip key={i} a={a} b={b} y={655} h={60} c={RED} strip={RST} />)}
        <path d={c1.map(([a, b]) => dots(LX(a), LX(b), 681, 12)).join('') + c1.filter((_, i) => i < 9 || i === 16).map(([a, b]) => dots(LX(a), LX(b), 707, 4, 9)).join('') + c1.filter((_, i) => i < 8).map(([a, b]) => dots(LX(a), LX(b), 699, 1, 4)).join('')} stroke="#331111" strokeWidth="1.8" />
        {c2.map(([a, b], i) => <LeftClip key={i} a={a} b={b} y={775} h={60} c={RED} strip={RST} />)}
        <path d={c2.map(([a, b]) => dots(LX(a), LX(b), 801, 12)).join('') + c2.map(([a, b]) => dots(LX(a), LX(b), 823, 5, 8)).join('')} stroke="#331111" strokeWidth="1.8" />
        {dl.map(([a, b, s], i) => <LeftClip key={i} a={a} b={b} y={894} h={61} c={RED} strip={RST} sel={s} />)}
        {dl.map(([a, b], i) => <path key={i} d={dlw(LX(a), LX(b), 911) + dlw(LX(a), LX(b), 940)} stroke="#8a0028" strokeWidth="1.6" />)}
        <LeftClip a={740} b={918} y={955} h={60} c={RED} strip={RST} />
        <path d={dlw(LX(740), LX(918), 971) + dlw(LX(740), LX(918), 1000)} stroke="#8a0028" strokeWidth="1.6" />
        {/* orange */}
        {bs.map(([a, b], i) => <LeftClip key={i} a={a} b={b} y={1015} h={60} c={ORA} strip={OST} />)}
        <path d={bs.map(([a]) => { const x = LX(a); return `M${x + 12} 1039h8M${x + 30} 1039h8M${x + 58} 1039h6M${x} 1051h8M${x + 48} 1051h10`; }).join('') + `M${LX(1455)} 1031H${LX(1551)}M${LX(1430)} 1043h18`} stroke="#b5561a" strokeWidth="1.6" />
        {bl.map(([a, b], i) => <LeftClip key={i} a={a} b={b} y={1075} h={60} c={ORA} strip={OST} />)}
        <path d={`M${LX(976)} 1090 Q${LX(985)} 1082 ${LX(1000)} 1082 L${LX(1028)} 1080` + ' ' + autoPts.map(([X, Y]) => `L${LX(X)} ${y5(Y)}`).join(' ')} stroke="#111" strokeWidth="1.6" fill="none" />
        {autoPts.map(([X, Y], i) => <rect key={i} x={LX(X) - 2.5} y={y5(Y) - 2.5} width="5" height="5" fill="#111" />)}
        {/* green */}
        {pul.map(([a, b], i) => <LeftClip key={i} a={a} b={b} y={1135} h={60} c={GRN} />)}
        <path d={hlines(pl, y5)} stroke="#0b4b0b" strokeWidth="1.5" />
        {sof.map(([a, b], i) => <LeftClip key={i} a={a} b={b} y={1255} h={61} c={GRN} />)}
        <path d={hlines(sl, y6)} stroke="#0b4b0b" strokeWidth="1.5" />
        {p8.map(([a, b], i) => <LeftClip key={i} a={a} b={b} y={1375} h={60} c={GRN} />)}
        <path d={hlines(pad, y6)} stroke="#0b4b0b" strokeWidth="1.5" />
        {m2.map(([a, b], i) => <LeftClip key={i} a={a} b={b} y={1436} h={59} c={GRN} />)}
        <path d={`M${LX(28)} 1487 L${LX(40)} 1472 H${LX(70)} L${LX(117)} 1468 ` + m2Pts.map(([X, Y]) => `L${LX(X)} ${y6(Y)}`).join(' ')} stroke="#111" strokeWidth="1.5" fill="none" />
        {m2Pts.map(([X, Y], i) => <rect key={i} x={LX(X) - 2.5} y={y6(Y) - 2.5} width="5" height="5" fill="#111" />)}
        <LeftClip a={1454} b={1551} y={1495} h={60} c={GRN} />
        <path d={`M${LX(1456)} 1508h40M${LX(1520)} 1508h20M${LX(1456)} 1518h40M${LX(1510)} 1528h30M${LX(1456)} 1532h36`} stroke="#0b4b0b" strokeWidth="1.5" />
        {/* audio */}
        <rect x={LX(28)} y="1615" width={LX(1551) - LX(28)} height="60" fill="#0091f0" />
        <path d="M1873 1615H3136M1873 1675H3136" stroke="#1d3c52" strokeWidth="3" />
        <path d={waveD(LX(28), LX(1551), 1647, eg1Fn(1871, 74, 18, 2463, 3055), 3, 1)} stroke="#002b4d" strokeWidth="1" />
        <rect x="2463" y="1675" width="673" height="59" fill="#0091f0" />
        <path d={waveD(2464, 3136, 1706, eg2Fn(2464, 74, 25), 5, 1)} stroke="#002b4d" strokeWidth="1" />
        {/* play lines */}
        <path d="M2463 485V1734M3055 485V1734" stroke="#ffe600" strokeWidth="2" />
        <path d="M1871 485V2134" stroke="#128a12" strokeWidth="3.5" />
        <polygon points="1868,450 1884,450 1884,464 1869,485 1868,485" fill="#7d7d7d" />
        <path d="M1868 2134H3136V1734" stroke="#333" strokeWidth="1.5" fill="none" />
        <Marker x={1869} y={418} />
        <Marker x={2463} y={418} />
        <Marker x={3055} y={418} />
        <Marker x={3155} y={418} />
      </svg>
      {[[1887, 'A section'], [2478, 'B section'], [3070, 'A section']].map(([x, t]) => (
        <span key={t as string + x} className="absolute top-[7px] text-[18px] text-[#b4b4b4] whitespace-nowrap" style={{ left: (x as number) - 1868 }}>{t as string}</span>
      ))}
      {Array.from({ length: 17 }, (_, i) => (
        <span key={i} className="absolute top-[31px] text-[19px] leading-[20px] text-[#b8b8b8] flex flex-col" style={{ left: LB(i + 1) + 5 - 1868 }}><span>{i + 1}</span><span>1</span></span>
      ))}
    </div>
  );
}

function BottomBar({ left, x0, w }: { left?: React.ReactNode; x0: number; w: number }) {
  return (
    <div className="h-[30px] flex items-center shrink-0">
      {left}
      <svg width="12" height="18" viewBox="0 0 12 18" style={{ marginLeft: x0 }} className="shrink-0"><polygon points="12,0 0,9 12,18" fill="#333" /></svg>
      <div className="ml-[12px] h-[14px] rounded-[7px] bg-[#2e2e2e] shrink-0" style={{ width: w }} />
    </div>
  );
}

function TracksView() {
  return (
    <div className="flex flex-col flex-1 bg-[#4d4d4d] min-h-0">
      <Tabs active="Tracks" />
      <div className="flex h-[40px] mt-[12px] shrink-0">
        <div className="ml-[11px] w-[330px] h-[40px] border-[3px] border-[#3e3e3e] flex items-center text-[20px] text-[#bdbdbd]">
          <span className="w-[36px] h-full border-r-[2px] border-[#3e3e3e] flex items-center justify-center">C</span>
        </div>
        <SBox className="ml-[1175px]" />
      </div>
      <div className="flex mt-[4px] flex-1 min-h-0">
        <TracksTable />
        <div className="w-[19px] shrink-0 border-r-[3px] border-[#3a3a3a]" />
        <div className="flex flex-col">
          <LeftTimeline />
          <div className="flex items-center h-[30px] relative">
            <BottomBar x0={6} w={625} />
            <div className="ml-auto mr-[20px] flex items-center gap-[14px]">
              <svg width="12" height="18" viewBox="0 0 12 18"><polygon points="0,0 12,9 0,18" fill="#333" /></svg>
              <span className="w-[16px] h-[4px] bg-[#333]" />
              <svg width="16" height="16" viewBox="0 0 16 16"><path d="M8 0V16M0 8H16" stroke="#333" strokeWidth="4" /></svg>
            </div>
          </div>
        </div>
      </div>
    </div>
  );
}

/* ---------- Sequence view ---------- */
const RB = (n: number) => 3701 + 192 * (n - 1);
const Z10 = (X: number) => X / 0.729 + 4200;
type Nt = [number, number, number];

function Note({ n, h, sp = 0.62, c = ['#2f9800', '#33e400'] }: { n: Nt; h: number; sp?: number; c?: string[] }) {
  const [a, b, y] = n;
  const w = b - a;
  return (
    <g>
      <rect x={a} y={y - h / 2} width={w} height={h} rx="2" fill={c[1]} stroke="#1e3d10" strokeWidth="1.5" />
      <rect x={a + 1} y={y - h / 2 + 1} width={(w - 2) * sp} height={h - 2} fill={c[0]} />
    </g>
  );
}

function RightCanvas() {
  const bands: [number, number, number[]][] = [
    [24, 0, [720, 768, 816, 888, 936]],
    [16, 0, [1012, 1044, 1076, 1124, 1156, 1204, 1236, 1268, 1316]],
    [12, 0, [1356, 1380, 1416, 1440, 1476, 1500, 1524, 1560, 1584, 1620]],
  ];
  const pul: Nt[] = [
    [3703, 5229, 1036], [3986, 4077, 1051], [4366, 4461, 1051], [4752, 4842, 1051], [5137, 5229, 1051],
    [3703, 3981, 1084], [4079, 4359, 1084], [4463, 4748, 1084], [4843, 5131, 1084], [5229, 6267, 1084],
    [3984, 4074, 1116], [4366, 4457, 1116], [4752, 4836, 1116], [5137, 5220, 1116],
    [4079, 4362, 1148], [4843, 5134, 1148],
    [3703, 3981, 1164], [4463, 4745, 1164], [5229, 5272, 1164],
    [3984, 4074, 1196], [4364, 4461, 1196], [4752, 4836, 1196], [5137, 5220, 1196],
    [4081, 4358, 1228], [4844, 5120, 1228], [5231, 6267, 1276],
  ];
  const sof: Nt[] = [
    [3701, 4362, 1386], [3980, 4063, 1410], [4364, 4461, 1410],
    [3701, 3941, 1446], [4074, 4348, 1446], [4463, 5135, 1446],
    [3978, 4049, 1470], [4366, 4447, 1470], [4744, 4804, 1470], [5136, 5200, 1470],
    [3701, 3943, 1493], [4076, 4331, 1493], [4463, 4710, 1493], [4839, 5136, 1493],
    [3978, 4053, 1506], [4366, 4442, 1506], [4744, 4813, 1506], [5138, 5196, 1506],
    [3701, 3937, 1530], [4465, 4708, 1530], [4839, 5110, 1530], [5234, 6267, 1530],
    [3981, 4049, 1553], [4366, 4436, 1553], [4745, 4808, 1553], [5136, 5194, 1553],
    [4076, 4331, 1578], [4839, 5093, 1578],
  ];
  const b1 = [[755, 770], [791, 803], [843, 862], [1036, 1051], [1071, 1083], [1123, 1143], [1316, 1331], [1351, 1359], [1403, 1422]];
  const b2 = [[737, 754], [826, 843], [1018, 1034], [1106, 1122], [1298, 1314], [1386, 1401]];
  const vel = [[3701, 3947], [3978, 4055], [4076, 4325], [4366, 4434], [4463, 4713], [4745, 4813], [4837, 5091], [5135, 5191], [5233, 6267]];
  const cl = [3703, 4085, 4469, 4851];
  const dlw = (x0: number, y: number) => {
    let d = `M${x0} ${y}H${x0 + 381}`;
    [95, 186, 190, 216, 240, 285, 372].forEach((o, i) => {
      const h = i === 1 ? 6 : i === 0 || i === 5 ? 16 : i === 2 ? 5 : 7;
      d += `M${x0 + o} ${y - h}V${y + h}M${x0 + o + 2} ${y - h + 2}V${y + h - 2}`;
    });
    return d;
  };
  const ticks = (() => {
    let d = '';
    for (let x = 3701, i = 0; x < 6262; x += 12, i++) {
      const t = i % 16 === 0 ? 487 : i % 4 === 0 ? 489 : 495;
      d += `M${x} ${t}V501`;
    }
    return d;
  })();
  const beats = (() => {
    let d = '';
    for (let x = 3701; x < 6267; x += 48) d += `M${x} 503V2123`;
    return d;
  })();
  const bars = (() => {
    let d = '';
    for (let x = 3701 + 192; x < 6267; x += 192) d += `M${x} 503V2123`;
    return d;
  })();
  return (
    <div className="relative w-[2589px] h-[1682px] shrink-0">
      <svg width={2589} height={1682} viewBox="3678 452 2589 1682" className="block">
        <rect x="3678" y="503" width="2589" height="83" fill="#4e4e4e" />
        <rect x="3678" y="586" width="2589" height="1537" fill="#5f5f5f" />
        <rect x="3678" y="708" width="2589" height="296" fill="#565656" />
        <rect x="3678" y="1004" width="2589" height="334" fill="#565656" />
        <rect x="3678" y="1338" width="2589" height="313" fill="#565656" />
        {bands.map(([h, , ys], i) => ys.map((y) => <rect key={i + '-' + y} x="3678" y={y} width="2589" height={h} fill="#434343" />))}
        <path d={ticks} stroke="#8d8d8d" strokeWidth="1" />
        <path d={beats} stroke="#4b4b5e" strokeWidth="1.2" />
        <path d={bars} stroke="#2b2b2b" strokeWidth="1.8" />
        <path d="M5684 466V503" stroke="#2b2b2b" />
        <path d="M3678 503H6267M3678 534H6267M3678 558H6267M3678 584H6267M3678 503V586M6267 503V2134" stroke="#343434" strokeWidth="2.5" fill="none" />
        <rect x="5237" y="560" width="1030" height="21" fill="#2f7b40" />
        <polygon points="3893,538 3893,555 3903,546" fill="#9a9a9a" stroke="#1f1f1f" strokeWidth="1.8" />
        <rect x="4254" y="537" width="19" height="19" fill="#8e8e8e" stroke="#111" strokeWidth="2.5" />
        <polygon points="5237,562 5237,580 5246,571" fill="#8a8a8a" stroke="#1f1f1f" strokeWidth="1.8" />
        {/* separators */}
        <path d="M3678 706H6267M3678 1003.5H6267M3678 1337H6267M3678 1650.5H6267M3678 1886.5H6267M3678 2123H6267" stroke="#c8c8c8" strokeWidth="3" />
        {/* drum clips */}
        {cl.map((x, i) => {
          const sel = i === 3;
          return (
            <g key={x}>
              <rect x={x} y={588} width={382} height={115} fill={sel ? '#6b5a8c' : '#ff0033'} stroke={sel ? '#116a92' : '#050505'} strokeWidth="3" />
              <rect x={x + 1.5} y={589} width={379} height={27} fill={sel ? '#44507a' : '#a00018'} />
              {sel && <rect x={4882} y={617} width={323} height={57} fill="#ff0033" />}
              <path d={`M${x + 96} 616V703M${x + 288} 616V703M${x + 192} 616V703`} stroke="#ff6a80" strokeWidth="1.5" />
              <path d={dlw(x, 636) + dlw(x, 678)} stroke="#8a0028" strokeWidth="1.5" />
              <rect x={x - 4} y={617} width={sel ? 8 : 12} height={12} fill="none" stroke="#7d0020" strokeWidth="1.8" />
              <rect x={x + 6} y={684} width={90} height={18} rx="3" fill={sel ? '#5a4470' : '#d90030'} />
            </g>
          );
        })}
        <rect x="5226" y="617" width="8" height="12" fill="none" stroke="#7d0020" strokeWidth="1.8" />
        {/* bass */}
        {b1.map(([a, b]) => <rect key={a} x={Z10(a)} y={817} width={Z10(b) - Z10(a)} height={22} rx="3" fill="#c85f18" stroke="#3a2c1a" strokeWidth="2" />)}
        {b2.map(([a, b]) => <rect key={a} x={Z10(a)} y={865} width={Z10(b) - Z10(a)} height={22} rx="3" fill="#c85f18" stroke="#3a2c1a" strokeWidth="2" />)}
        {/* pads */}
        {pul.map((n, i) => <Note key={i} n={n} h={13} />)}
        {sof.map((n, i) => <Note key={i} n={n} h={10} />)}
        {vel.map(([a, b]) => <rect key={a} x={a} y={1645} width={b - a} height={4} fill="#00d800" />)}
        {/* guitar 1 */}
        <rect x="3703" y="1656" width="2564" height="27" fill="#00446e" />
        <rect x="3703" y="1683" width="2564" height="197" fill="#0091f0" />
        <path d={waveD(3703, 6267, 1783, eg1Fn(3703, 192, 97, 5233, 6267), 9)} stroke="#002b4d" strokeWidth="1.6" />
        <path d="M3703 1880.5H6267" stroke="#050505" strokeWidth="3" />
        <path d="M3893 1683V1880M4085 1683V1880M4277 1683V1880M4469 1683V1880M4661 1683V1880M4853 1683V1880M5045 1683V1880M5429 1683V1880M5621 1683V1880M5813 1683V1880M6005 1683V1880M6197 1683V1880" stroke="#8a9aa6" strokeWidth="1" opacity="0.55" />
        {/* guitar 2 */}
        <rect x="5233" y="1894" width="1034" height="26" fill="#00446e" />
        <rect x="5233" y="1920" width="1034" height="197" fill="#0091f0" />
        <path d={waveD(5235, 6267, 2018, eg2Fn(5235, 192, 97), 13)} stroke="#002b4d" strokeWidth="1.6" />
        <path d="M5233 1892H6267M5233 2118.5H6267M5233 1892V2118" stroke="#050505" strokeWidth="3" />
        <rect x="5238" y="2094" width="86" height="22" rx="3" fill="#00355e" />
        <rect x="3708" y="1854" width="108" height="24" rx="3" fill="#0a5ea0" />
        <rect x="3678" y="2123" width="2589" height="11" fill="#363636" />
        {/* lines */}
        <path d="M5237 503V2123" stroke="#ffe600" strokeWidth="1.5" />
        <path d="M3701 503V2134" stroke="#128a12" strokeWidth="3" />
        <path d="M3686 466 H3713 V490 L3700 502 L3686 490 Z" fill="#7d7d7d" stroke="#444" />
        <Marker x={3701} y={508} h={22} />
        <Marker x={5237} y={508} h={22} />
      </svg>
      <span className="absolute top-[8px] text-[19px] text-[#b8b8b8]" style={{ left: 3700 - 3678 + 7 }}>1</span>
      {Array.from({ length: 13 }, (_, i) => (
        <span key={i} className="absolute top-[8px] text-[19px] text-[#b8b8b8]" style={{ left: RB(i + 2) + 7 - 3678 }}>{i + 2}</span>
      ))}
      <span className="absolute top-[56px] left-[31px] text-[18px] text-[#b8b8b8] whitespace-nowrap">A section</span>
      <span className="absolute top-[56px] left-[1567px] text-[18px] text-[#b8b8b8] whitespace-nowrap">B section</span>
      {cl.map((x) => (
        <React.Fragment key={x}>
          <span className="absolute top-[136px] text-[20px] text-white whitespace-nowrap" style={{ left: x + 6 - 3678 }}>Drum Loop</span>
          <span className="absolute top-[231px] text-[17px] text-white whitespace-nowrap" style={{ left: x + 10 - 3678 }}>†&nbsp;&nbsp;0.00 dB</span>
        </React.Fragment>
      ))}
      <span className="absolute top-[1205px] left-[30px] text-[20px] text-white whitespace-nowrap">Electric Guitar 1.35</span>
      <span className="absolute top-[1403px] left-[35px] text-[17px] text-white whitespace-nowrap">†&nbsp;&nbsp;0.00 dB</span>
      <span className="absolute top-[1443px] left-[1558px] text-[20px] text-white whitespace-nowrap">Electric Guitar 2.27</span>
      <span className="absolute top-[1642px] left-[1565px] text-[17px] text-white whitespace-nowrap">†&nbsp;&nbsp;0.00 dB</span>
    </div>
  );
}

const Sel = ({ children, w = 165, c }: { children: React.ReactNode; w?: number; c?: string }) => (
  <div className="h-[28px] bg-[#222] text-[#bcbcbc] text-[20px] flex items-center justify-between pl-[4px] pr-[10px] whitespace-nowrap shrink-0" style={{ width: w, background: c }}>
    <span className="flex items-center">{children}</span><Caret s={13} c={c ? '#0a8a0a' : '#8a8a8a'} />
  </div>
);
const O = ({ t }: { t: string }) => <><b className="mr-[5px] text-[#ccc]">O</b>{t}</>;
const I = ({ t }: { t: string }) => <><b className="w-[4px] h-[18px] bg-[#c8c8c8] inline-block ml-[4px] mr-[10px]" />{t}</>;
const Lines = () => (
  <><svg width="34" height="20" viewBox="0 0 34 20" className="mr-[4px]"><path d="M2 16 H14 L26 8 H32" stroke="#aaa" strokeWidth="1.5" fill="none" /><circle cx="4" cy="17" r="2" fill="#00bfff" /><circle cx="14" cy="17" r="2" fill="#00bfff" /><circle cx="27" cy="5" r="2" fill="#00bfff" /></svg>Lines</>
);

function TrackHead({ n, t, bg, rec = true, sel }: { n: string; t: string; bg: string; rec?: boolean; sel?: boolean }) {
  return (
    <div className="h-[30px] flex items-center shrink-0 text-[20px] text-white relative border-b-[2px] border-[#3f3f3f]" style={{ background: bg }}>
      <span className="w-[28px] pl-[8px] shrink-0 flex justify-center"><TypeIcon t={t} white /></span>
      <span className={sel ? 'bg-[#0072a3] w-[99px] h-full flex items-center' : ''}>{n}</span>
      <span className="absolute left-[208px]"><svg width="18" height="24" viewBox="0 0 18 24"><polygon points="1,1 17,12 1,23" fill="#00e000" stroke="#0a5a0a" strokeWidth="1" /></svg></span>
      {rec && <span className="absolute left-[236px] w-[18px] h-[18px] rounded-full bg-[#5e0000] border border-[#111]" />}
      <span className="absolute left-[262px] w-[22px] flex flex-col gap-[2px]">
        <i className="h-[4px] bg-[#222]" /><i className="h-[4px] bg-[#222]" /><i className="h-[4px] bg-[#222]" />
      </span>
    </div>
  );
}

function Piano({ top, h, pitch, ys, labels }: { top: number; h: number; pitch: number; ys: number[]; labels: [string, number][] }) {
  return (
    <div className="relative w-[37px] shrink-0 bg-[#f0f0f0] self-start" style={{ height: h }}>
      <svg width="37" height={h} viewBox={`0 ${top} 37 ${h}`} className="block">
        <path d={ys.map((y) => `M18 ${y + pitch / 2}H37`).join('')} stroke="#888" strokeWidth="1.5" />
        {ys.map((y) => <rect key={y} x="0" y={y} width="18" height={pitch} fill="#1a1a1a" />)}
      </svg>
      {labels.map(([l, y]) => <span key={l} className="absolute left-[8px] text-[15px] font-bold leading-none text-[#222]" style={{ top: y - top }}>{l}</span>)}
    </div>
  );
}

function Strip({ h, glyph, thumb, piano, thumbY }: { h: number; glyph?: boolean; thumb: number; thumbY: number; piano?: React.ReactNode }) {
  return (
    <div className="w-[116px] shrink-0 flex bg-[#505050]" style={{ height: h }}>
      <div className="w-[17px] ml-[1px] shrink-0 flex flex-col">
        <svg width="17" height="34" viewBox="0 0 17 34"><polygon points="4,4 12,12 4,20" fill="#333" /></svg>
        <div className="flex-1 bg-[#00293c] border-x border-[#333]" />
      </div>
      <div className="flex-1 relative">
        {glyph && <span className="absolute left-[8px] top-[2px] text-[28px] leading-none text-[#2a2a2a]">♪</span>}
        <svg width="20" height="22" viewBox="0 0 20 22" className="absolute left-[38px] top-[4px]"><circle cx="8" cy="8" r="6" fill="none" stroke="#2e2e2e" strokeWidth="3" /><path d="M12 12 L18 20" stroke="#2e2e2e" strokeWidth="3.5" /></svg>
        <div className="absolute left-[43px] w-[6px] bg-[#3e3e3e]" style={{ top: 44, bottom: 20 }}>
          <div className="absolute left-0 w-[6px] bg-[#8a8a8a]" style={{ top: thumbY, height: thumb }} />
        </div>
      </div>
      {piano}
    </div>
  );
}

function SeqTrack({ head, rows, h, strip, foot }: { head: React.ReactNode; rows: React.ReactNode[]; h: number; strip: React.ReactNode; foot?: React.ReactNode }) {
  return (
    <div className="flex shrink-0 border-b-[2px] border-[#3e3e3e] box-content" style={{ height: h }}>
      <div className="w-[299px] shrink-0 flex flex-col bg-[#505050]">
        {head}
        <div className="flex flex-col gap-[8px] pl-[32px] pt-[4px]">{rows}</div>
        {foot}
        <div className="mt-auto mb-[4px] ml-[12px]"><svg width="10" height="20" viewBox="0 0 10 20"><polygon points="1,2 9,10 1,18" fill="#222" /></svg></div>
      </div>
      {strip}
    </div>
  );
}

function SequenceList() {
  const ybands1 = [720, 768, 816, 888, 936];
  const ybands2 = [1012, 1044, 1076, 1124, 1156, 1204, 1236, 1268, 1316];
  const ybands3 = [1356, 1380, 1416, 1440, 1476, 1500, 1524, 1560, 1584, 1620];
  const midi = (o: string) => [<Sel key="a">Note</Sel>, <Sel key="b"><I t="any" /></Sel>, <Sel key="c"><O t={o} /></Sel>, <Sel key="d">Insert</Sel>, <Sel key="e">take 1</Sel>, <Sel key="f">--</Sel>, <Sel key="g"><Lines /></Sel>];
  const audio = [
    <Sel key="a">Soundbites</Sel>, <Sel key="b"><I t="--" /></Sel>, <Sel key="c"><O t="Focu...lt 1-2" /></Sel>,
    <div key="d" className="flex gap-[6px]"><Sel w={76} c="#0a4a0a">Auto</Sel><Sel w={83}>Insert</Sel></div>,
    <Sel key="e">take 1</Sel>,
  ];
  return (
    <div className="w-[415px] shrink-0 flex flex-col">
      <div className="h-[134px] shrink-0 bg-[#4d4d4d] border-b-[3px] border-[#3e3e3e]" />
      <SeqTrack h={118} head={<TrackHead n="Drum Loop" t="a" bg="#7a0018" rec={false} sel />} rows={[<Sel key="a">Soundbites</Sel>, <Sel key="b"><I t="--" /></Sel>]} strip={<Strip h={118} thumb={6} thumbY={36} />} />
      <SeqTrack h={295} head={<TrackHead n="Bass" t="n" bg="#d85f00" />} rows={midi('Bass...i in-in')}
        strip={<Strip h={295} glyph thumb={24} thumbY={130} piano={<div className="self-start mt-[6px]"><Piano top={714} h={282} pitch={24} ys={ybands1} labels={[['C1', 966]]} /></div>} />} />
      <SeqTrack h={331} head={<TrackHead n="Pulsing Pad" t="n" bg="#008a00" />} rows={midi('Modu...i in-in')}
        foot={<div className="flex items-center pl-[32px] mt-[12px] text-[20px] text-[#bcbcbc]"><span>Quantize</span><span className="ml-[20px] w-[20px] h-[20px] rounded-[4px] bg-[#5c5c5c] border-[2px] border-[#333]" /><span className="ml-[8px] text-[30px] leading-none text-[#111]">♪</span></div>}
        strip={<Strip h={331} glyph thumb={36} thumbY={108} piano={<div className="self-start mt-[4px]"><Piano top={1009} h={320} pitch={16} ys={ybands2} labels={[['C3', 1173]]} /></div>} />} />
      <SeqTrack h={311} head={<TrackHead n="Softer Pad" t="n" bg="#008a00" />} rows={midi('Proton-1-in')}
        strip={<Strip h={311} glyph thumb={44} thumbY={110} piano={<div className="self-start mt-[4px]"><Piano top={1343} h={300} pitch={12} ys={ybands3} labels={[['C3', 1452], ['C2', 1596]]} /></div>} />} />
      <SeqTrack h={234} head={<TrackHead n="Electric Guitar 1" t="e" bg="#00446e" rec={false} />} rows={audio} strip={<Strip h={234} thumb={50} thumbY={70} />} />
      <SeqTrack h={232} head={<TrackHead n="Electric Guitar 2" t="e" bg="#00446e" rec={false} />} rows={audio} strip={<Strip h={232} thumb={110} thumbY={40} />} />
      <div className="h-[7px] bg-[#1f1f1f]" />
    </div>
  );
}

function SequenceView() {
  const box = 'border-[3px] border-[#3e3e3e] flex items-center text-[20px] text-[#bdbdbd] whitespace-nowrap shrink-0 h-[40px]';
  const lab = 'h-full border-r-[2px] border-[#3e3e3e] flex items-center justify-center shrink-0';
  return (
    <div className="flex flex-col flex-1 bg-[#4d4d4d] min-h-0">
      <Tabs active="Sequence" />
      <div className="flex mt-[12px] h-[40px] shrink-0 relative">
        <div className={box + ' ml-[10px] w-[506px]'}>
          <span className={lab + ' w-[38px]'}>M</span>
          <span className="ml-[16px]">A</span>
          <span className="ml-[12px] w-[99px] h-[28px] rounded-[4px] bg-[#484848]" />
          <span className="ml-[10px] flex flex-col gap-[4px]"><svg width="14" height="11" viewBox="0 0 14 11"><polygon points="7,0 14,11 0,11" fill="#333" /></svg><svg width="14" height="11" viewBox="0 0 14 11"><polygon points="0,0 14,0 7,11" fill="#333" /></svg></span>
          <span className="ml-[16px] w-[24px] h-[26px] rounded-full bg-[#f0f0f0] border-[2px] border-[#333] shrink-0" />
          <div className="ml-[20px] w-[112px] shrink-0 flex flex-col items-center">
            <div className="w-full h-[10px] bg-[#111] border border-[#555] relative mt-[4px]"><span className="absolute left-[34px] -top-[3px] w-[22px] h-[14px] rounded-[2px] bg-[#c9c9c9]" /></div>
            <span className="text-[10px] leading-[14px] mt-[4px] tracking-[1px] text-[#8a8a8a]">48 12 3 0 3 6</span>
          </div>
          <div className="ml-[10px] flex flex-col gap-[5px]">
            <div className="flex gap-[2px]"><i className="w-[85px] h-[12px] bg-[#00293c]" /><i className="w-[10px] h-[12px] bg-[#00293c]" /></div>
            <div className="flex gap-[2px]"><i className="w-[85px] h-[12px] bg-[#00293c]" /><i className="w-[10px] h-[12px] bg-[#00293c]" /></div>
          </div>
        </div>
        <div className={box + ' ml-[1997px] w-[472px]'}>
          <span className={lab + ' w-[36px]'}>G</span>
          <span className="ml-[7px] flex"><Toggle /></span>
          <span className="ml-[8px] w-[88px] h-[32px] bg-[#222] flex items-center justify-between px-[3px]"><span>Fixed</span><Caret s={11} /></span>
          <span className="ml-[20px] text-[28px] leading-none text-[#111]">♩</span>
          <span className="ml-[12px]">1|000</span>
          <span className="ml-[8px] flex"><Toggle /></span>
          <svg width="12" height="24" viewBox="0 0 12 24" className="ml-[4px]"><path d="M1 1H11V16L6 23L1 16Z" fill="#4040ff" stroke="#222" /></svg>
          <span className="ml-[22px] flex"><Toggle /></span>
          <svg width="12" height="24" viewBox="0 0 12 24" className="ml-[4px]"><path d="M1 1H11V16L6 23L1 16Z" fill="#ffe000" stroke="#222" /></svg>
          <span className="ml-[18px] flex"><Toggle c="#222" /></span>
          <span className="ml-[6px]">Rel</span>
        </div>
      </div>
      <div className="flex mt-[4px] h-[40px] shrink-0">
        <div className={box + ' ml-[10px] w-[332px]'}>
          <span className={lab + ' w-[38px]'}>C</span>
          <span className="ml-[9px]">10|4|359</span>
          <span className="ml-auto mr-[9px]">Db3 • 61</span>
        </div>
        <div className={box + ' ml-[16px] w-[514px]'}>
          <span className={lab + ' w-[36px]'}>E</span>
          <span className="ml-[21px]">7|1|000</span>
          <span className="ml-[10px]">Drum Loop</span>
          <span className="ml-[8px] flex"><Toggle /></span>
          <span className="ml-[6px] text-[22px] leading-none">↔</span>
          <span className="ml-[6px]">8|000</span>
          <span className="ml-[6px]">0.00</span>
          <span className="ml-[10px] text-[24px] leading-none text-[#ddd]">♩</span>
          <span className="ml-[2px]">= 123.00</span>
        </div>
        <SBox className="ml-[631px]" />
      </div>
      <div className="flex flex-1 min-h-0">
        <SequenceList />
        <div className="flex flex-col">
          <RightCanvas />
        </div>
        <div className="flex-1 relative">
          <svg width="22" height="26" viewBox="0 0 22 26" className="absolute left-[4px] top-[54px]"><path d="M6 2H16V18L11 24L6 18Z" fill="#ffe000" stroke="#555" strokeWidth="1.5" /></svg>
          <svg width="14" height="20" viewBox="0 0 14 20" className="absolute left-[11px] top-[128px]"><polygon points="7,0 14,20 0,20" fill="#454545" /></svg>
          <svg width="14" height="20" viewBox="0 0 14 20" className="absolute left-[11px] top-[1620px]"><polygon points="0,0 14,0 7,20" fill="#454545" /></svg>
          <svg width="14" height="20" viewBox="0 0 14 20" className="absolute left-[8px] top-[1644px]"><path d="M7 0V20M0 10H14" stroke="#333" strokeWidth="4" /></svg>
          <span className="absolute left-[8px] top-[1670px] w-[14px] h-[6px] bg-[#333]" />
        </div>
      </div>
      <div className="h-[31px] shrink-0 flex items-center">
        <svg width="30" height="26" viewBox="0 0 30 26" className="ml-[5px] shrink-0"><path d="M1 2H29V7H1ZM1 9H8V25H1ZM11 9H29V25H11Z" fill="#2f2f2f" /></svg>
        <svg width="24" height="22" viewBox="0 0 24 22" className="ml-[12px] shrink-0"><path d="M1 6H7L9 2H15L17 6H23V21H1Z" fill="#2f2f2f" /><circle cx="12" cy="13" r="4" fill="#5a5a5a" /></svg>
        <svg width="12" height="18" viewBox="0 0 12 18" className="ml-[10px] shrink-0"><polygon points="12,0 0,9 12,18" fill="#2f2f2f" /></svg>
        <div className="ml-[12px] w-[1223px] h-[14px] rounded-[7px] bg-[#2e2e2e] shrink-0" />
        <div className="ml-auto mr-[38px] flex items-center gap-[14px]">
          <svg width="12" height="18" viewBox="0 0 12 18"><polygon points="0,0 12,9 0,18" fill="#333" /></svg>
          <span className="w-[16px] h-[4px] bg-[#333]" />
          <svg width="16" height="16" viewBox="0 0 16 16"><path d="M8 0V16M0 8H16" stroke="#333" strokeWidth="4" /></svg>
        </div>
      </div>
    </div>
  );
}

function Win({ children, ml }: { children: React.ReactNode; ml: number }) {
  return (
    <div className="w-[3074px] h-[2107px] shrink-0 rounded-t-[22px] rounded-b-[14px] overflow-hidden flex flex-col bg-[#3d3d3d] shadow-[0_24px_70px_rgba(0,0,0,0.38)]" style={{ marginLeft: ml }}>
      <Titlebar />
      <Toolbar />
      <div className="h-[14px] shrink-0" />
      <div className="mx-[17px] mr-[18px] flex-1 min-h-0 flex flex-col border-t-[6px] border-x-[3px] border-b-[4px] border-[#5c5c5c] rounded-t-[4px] mb-[15px] overflow-hidden">
        {children}
      </div>
    </div>
  );
}

export default function App() {
  // The headless window may be narrower than the 6600 px design: fit the design to it.
  const sx = Math.min(1, window.innerWidth / 6600);
  const sy = Math.min(1, window.innerHeight / 2332);
  return (
    <div className="w-screen h-screen overflow-hidden bg-white">
      <div
        className="w-[6600px] h-[2332px] origin-top-left overflow-hidden font-['Liberation_Sans',Arial,sans-serif]"
        style={{ transform: `scale(${sx}, ${sy})` }}
      >
        <div className="flex pt-[76px]">
          <Win ml={112}><TracksView /></Win>
          <Win ml={57}><SequenceView /></Win>
        </div>
      </div>
    </div>
  );
}
